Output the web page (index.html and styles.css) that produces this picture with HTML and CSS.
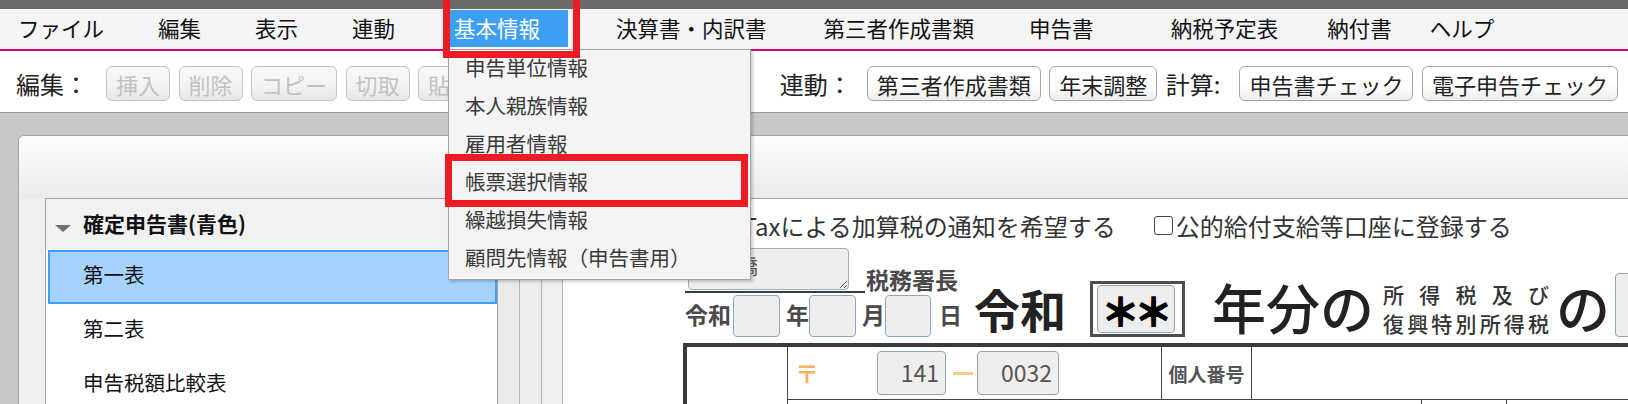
FILE: index.html
```html
<!DOCTYPE html>
<html lang="ja">
<head>
<meta charset="utf-8">
<title>確定申告書</title>
<link rel="stylesheet" href="styles.css">
</head>
<body>
<div class="app">
  <div class="titlestrip"></div>
  <nav class="menubar">
    <span class="menu-item">ファイル</span>
    <span class="menu-item">編集</span>
    <span class="menu-item">表示</span>
    <span class="menu-item">連動</span>
    <span class="menu-item active">基本情報</span>
    <span class="menu-item">決算書・内訳書</span>
    <span class="menu-item">第三者作成書類</span>
    <span class="menu-item">申告書</span>
    <span class="menu-item">納税予定表</span>
    <span class="menu-item">納付書</span>
    <span class="menu-item">ヘルプ</span>
  </nav>
  <div class="toolbar">
    <div class="tool-group">
      <span class="tool-label">編集：</span>
      <button class="btn" disabled>挿入</button>
      <button class="btn" disabled>削除</button>
      <button class="btn" disabled>コピー</button>
      <button class="btn" disabled>切取</button>
      <button class="btn" disabled>貼付</button>
    </div>
    <div class="tool-group right">
      <span class="tool-label link">連動：</span>
      <button class="btn">第三者作成書類</button>
      <button class="btn">年末調整</button>
      <span class="tool-label calc">計算:</span>
      <button class="btn">申告書チェック</button>
      <button class="btn">電子申告チェック</button>
    </div>
  </div>
  <div class="workspace">
    <div class="panel">
      <div class="panel-head"></div>
      <div class="panel-body">
        <aside class="sidebar">
          <div class="side-head"><span class="tri"></span>確定申告書(青色)</div>
          <ul class="side-list">
            <li class="side-item selected">第一表</li>
            <li class="side-item">第二表</li>
            <li class="side-item">申告税額比較表</li>
          </ul>
        </aside>
        <div class="splitter"><span></span><span></span><span></span></div>
        <main class="form">
          <div class="checks">
            <label class="check"><span class="check-box"></span>e-Taxによる加算税の通知を希望する</label>
            <label class="check"><span class="check-box"></span>公的給付支給等口座に登録する</label>
          </div>
          <div class="title-row">
            <div class="office">
              <div class="addr-row">
                <div class="addr-line"><textarea class="office-input" readonly>日本橋</textarea></div>
                <span class="office-title">税務署長</span>
              </div>
              <div class="date-row">
                <span class="date-label first">令和</span>
                <span class="date-box"></span>
                <span class="date-label">年</span>
                <span class="date-box"></span>
                <span class="date-label">月</span>
                <span class="date-box narrow"></span>
                <span class="date-label day">日</span>
              </div>
            </div>
            <div class="title-main">
              <span class="era">令和</span>
              <div class="year-box"><div class="year-field">＊＊</div></div>
              <span class="year-suffix">年分の</span>
              <div class="tax-name"><span>所得税及び</span><span>復興特別所得税</span></div>
              <span class="no">の</span>
              <div class="kind-box"></div>
            </div>
          </div>
          <div class="table">
            <div class="t-first"></div>
            <div class="t-main">
              <div class="t-row1">
                <div class="postal">
                  <span class="postmark">〒</span>
                  <span class="zip">141</span>
                  <span class="zip-dash"></span>
                  <span class="zip long">0032</span>
                </div>
                <div class="mynum-label">個人番号</div>
                <div class="mynum"></div>
              </div>
              <div class="t-row2">
                <div class="c1"></div>
                <div class="c2"></div>
              </div>
            </div>
          </div>
        </main>
      </div>
    </div>
  </div>

  <div class="dropdown">
    <div class="dd-item">申告単位情報</div>
    <div class="dd-item">本人親族情報</div>
    <div class="dd-item">雇用者情報</div>
    <div class="dd-item">帳票選択情報</div>
    <div class="dd-item">繰越損失情報</div>
    <div class="dd-item">顧問先情報（申告書用）</div>
  </div>
  <div class="callout callout-menu"></div>
  <div class="callout callout-item"></div>
</div>
</body>
</html>
```

FILE: styles.css
```css
* { box-sizing: border-box; }
html, body { margin: 0; padding: 0; }
body {
  width: 1628px;
  height: 404px;
  overflow: hidden;
  background: #c8c8c8;
  font-family: "Noto Sans CJK JP", "Noto Sans", sans-serif;
  color: #1a1a1a;
}
.app { position: relative; width: 1628px; height: 404px; overflow: hidden; }

.titlestrip { height: 9px; background: #6b6b6b; }

/* menu bar */
.menubar {
  height: 42px;
  background: #f4f4f4;
  border-bottom: 2px solid #e2007a;
  display: flex;
  padding: 1px 0 0 18px;
}
.menu-item {
  height: 37px;
  line-height: 35px;
  font-size: 21.5px;
  padding-right: 27px;
  margin-right: 27px;
  color: #111;
  white-space: nowrap;
}
.menu-item.active {
  background: #3d9ff4;
  color: #fff;
  padding-left: 5px;
  padding-right: 28px;
  margin-right: 48px;
}
.menu-item:nth-child(6) { margin-right: 30px; }
.menu-item:nth-child(7) { margin-right: 28px; }
.menu-item:nth-child(8) { margin-right: 50px; }
.menu-item:nth-child(9) { margin-right: 22px; }
.menu-item:nth-child(10) { margin-right: 11px; }

/* toolbar */
.toolbar {
  height: 62px;
  background: #fff;
  border-bottom: 1px solid #9b9b9b;
  display: flex;
  align-items: center;
  justify-content: space-between;
  padding: 4px 10px 0 16px;
}
.tool-group { display: flex; align-items: center; }
.tool-label { font-size: 24px; color: #222; margin-right: 18px; line-height: 35px; white-space: nowrap; }
.tool-label.link { margin-right: 15px; }
.tool-label.calc { margin-left: 0; margin-right: 19px; }
.btn {
  appearance: none;
  height: 35px;
  padding: 0 9px;
  margin: 0 8.5px 0 0;
  font-family: "Noto Sans CJK JP", sans-serif;
  font-size: 22px;
  line-height: 32px;
  border: 1px solid #a7a7a7;
  border-radius: 6px;
  background: linear-gradient(#ffffff 0%, #ffffff 55%, #ebebeb 100%);
  color: #222;
  white-space: nowrap;
}
.btn:disabled {
  color: #c2c2c2;
  border-color: #c4c4c4;
  background: linear-gradient(#f8f8f8 0%, #f3f3f3 55%, #e6e6e6 100%);
}
.tool-group.right .btn:last-child { margin-right: 0; }

/* workspace + panel */
.workspace { padding: 22px 0 0 18px; height: 291px; }
.panel {
  height: 100%;
  border-top: 1px solid #a3a3a3;
  border-left: 1px solid #a3a3a3;
  border-top-left-radius: 6px;
  background: #efefef;
  display: flex;
  flex-direction: column;
}
.panel-head {
  height: 62px;
  flex-shrink: 0;
  background: linear-gradient(#fdfdfd, #ebebeb);
  border-top-left-radius: 5px;
}
.panel-body { flex: 1; display: flex; padding-left: 26px; min-height: 0; }

/* sidebar */
.sidebar {
  width: 453px;
  flex-shrink: 0;
  border: 1px solid #a5a5a5;
  border-bottom: none;
  background: #fff;
}
.side-head {
  height: 51px;
  background: #f1f1f1;
  display: flex;
  align-items: center;
  padding: 0 0 3px 9px;
  font-size: 21px;
  font-weight: bold;
  color: #111;
}
.tri {
  width: 0;
  height: 0;
  border-left: 8px solid transparent;
  border-right: 8px solid transparent;
  border-top: 7px solid #707070;
  margin: 11px 12px 0 0;
}
.side-list { list-style: none; margin: 0; padding: 0; }
.side-item {
  height: 54px;
  margin-left: 2px;
  border: 2px solid transparent;
  padding: 0 0 7px 33px;
  display: flex;
  align-items: center;
  font-size: 20.5px;
  color: #111;
}
.side-item.selected { background: #a5d3fd; border-color: #3f9ff5; }

/* splitter columns */
.splitter { display: flex; flex-shrink: 0; border-top: 1px solid #a5a5a5; }
.splitter span { width: 22px; border-right: 1px solid #b3b3b3; background: #ebebeb; }
.splitter span:nth-child(2) { background: #ededed; }
.splitter span:last-child { width: 21px; background: #efefef; }

/* form */
.form {
  flex: 1;
  min-width: 0;
  overflow: hidden;
  background: #fff;
  border-top: 1px solid #a5a5a5;
  padding-left: 120px;
  display: flex;
  flex-direction: column;
  color: #333;
}
.checks {
  display: flex;
  align-items: center;
  height: 32px;
  margin-top: 10px;
  padding-left: 17px;
  font-size: 24px;
  white-space: nowrap;
  flex-shrink: 0;
}
.check { display: flex; align-items: center; margin-right: 38px; }
.check-box {
  width: 19px;
  height: 19px;
  border: 1.5px solid #444;
  border-radius: 3px;
  margin-right: 3px;
  background: #fff;
}

.title-row { display: flex; align-items: flex-end; margin-top: 7px; flex-shrink: 0; }
.office { margin-left: 2px; display: flex; flex-direction: column; flex-shrink: 0; }
.addr-row { display: flex; align-items: flex-end; }
.addr-line { padding: 0 16px 1px 3px; border-bottom: 2px solid #3b3b3b; }
.office-input {
  display: block;
  width: 161px;
  height: 42px;
  margin: 0;
  border: 1px solid #97acc7;
  border-radius: 4px;
  background: #efeeec;
  font-family: "Noto Sans CJK JP", sans-serif;
  font-size: 21px;
  line-height: 26px;
  color: #555;
  padding: 3px 6px;
  resize: both;
  overflow: hidden;
}
.office-title {
  font-size: 23px;
  font-weight: bold;
  color: #4a4a4a;
  line-height: 30px;
  margin: 0 0 -1px 1px;
  white-space: nowrap;
}
.date-row {
  display: flex;
  align-items: center;
  margin-top: 2px;
  font-size: 23px;
  font-weight: bold;
  color: #4a4a4a;
}
.date-label { margin-left: 6px; line-height: 1; padding-bottom: 3px; }
.date-label.first { margin-left: 0; margin-right: 2px; }
.date-label.day { margin-left: 8px; }
.date-box {
  width: 47px;
  height: 42px;
  border: 1px solid #8ea6c3;
  border-radius: 4px;
  background: #efeeec;
}
.date-box.narrow { width: 46px; }

.title-main {
  display: flex;
  align-items: center;
  height: 56px;
  margin-left: 12px;
  color: #222;
  flex-shrink: 0;
  white-space: nowrap;
}
.era { font-size: 46px; font-weight: bold; line-height: 1; margin-right: 24px; padding-bottom: 3px; }
.year-box {
  width: 95px;
  height: 56px;
  flex-shrink: 0;
  border: 3px solid #4d4d4d;
  padding: 0 7px 0 4px;
  display: flex;
  align-items: center;
}
.year-field {
  width: 100%;
  height: 48px;
  border: 1px solid #8ea6c3;
  border-radius: 4px;
  background: #efeeec;
  font-size: 38px;
  font-weight: bold;
  letter-spacing: -5px;
  padding-right: 3px;
  color: #000;
  -webkit-text-stroke: 1.5px #000;
  display: flex;
  align-items: center;
  justify-content: center;
}
.year-suffix { font-size: 54px; font-weight: 500; line-height: 1; margin-left: 27px; padding-bottom: 5px; }
.tax-name {
  width: 166px;
  flex-shrink: 0;
  margin-left: 9px;
  font-size: 21px;
  line-height: 29px;
  font-weight: 500;
  color: #333;
}
.tax-name span { display: block; text-align: justify; text-align-last: justify; }
.no { font-size: 54px; font-weight: 500; line-height: 1; margin-left: 7px; padding-bottom: 5px; }
.kind-box {
  align-self: flex-end;
  width: 60px;
  height: 64px;
  flex-shrink: 0;
  margin-left: 5px;
  border: 1px solid #8ea6c3;
  border-radius: 4px;
  background: #efeeec;
}

/* table */
.table {
  display: flex;
  flex: 1;
  margin-top: 6px;
  border-top: 4px solid #3a3a3a;
  border-left: 4px solid #3a3a3a;
}
.t-first { width: 101px; flex-shrink: 0; border-right: 1px solid #444; }
.t-main { flex: 1; display: flex; flex-direction: column; }
.t-row1 { height: 53px; flex-shrink: 0; border-bottom: 1px solid #444; display: flex; }
.postal {
  width: 374px;
  flex-shrink: 0;
  border-right: 1px solid #444;
  display: flex;
  align-items: center;
  padding-left: 7px;
}
.postmark { width: 24px; margin-right: 58px; font-size: 24px; font-weight: bold; color: #fbb062; line-height: 1; }
.zip {
  width: 69px;
  height: 44px;
  border: 1px solid #8ea6c3;
  border-radius: 4px;
  background: #efeeec;
  font-size: 23px;
  line-height: 40px;
  color: #555;
  text-align: right;
  padding-right: 6px;
}
.zip.long { width: 82px; }
.zip-dash { width: 20px; height: 3px; background: #fdc98f; margin: 0 4px 0 7px; }
.mynum-label {
  width: 90px;
  flex-shrink: 0;
  border-right: 1px solid #444;
  display: flex;
  align-items: center;
  justify-content: center;
  font-size: 19px;
  font-weight: bold;
  color: #555;
}
.mynum { flex: 1; }
.t-row2 { display: flex; flex: 1; }
.t-row2 .c1 { width: 634px; border-right: 1px solid #444; }
.t-row2 .c2 { width: 85px; border-right: 1px solid #444; }

/* dropdown menu overlay */
.dropdown {
  position: absolute;
  left: 448px;
  top: 49px;
  width: 303px;
  padding-bottom: 1px;
  background: #f4f4f4;
  border: 1px solid #a3a3a3;
  box-shadow: 2px 2px 3px rgba(0, 0, 0, 0.2);
  z-index: 5;
}
.dd-item {
  height: 38px;
  line-height: 34px;
  padding: 0 0 4px 16px;
  font-size: 20.5px;
  color: #3a3a3a;
  white-space: nowrap;
}

/* red annotation boxes */
.callout { position: absolute; border: 7px solid #ed1c24; z-index: 6; }
.callout-menu { left: 443px; top: -10px; width: 137px; height: 68px; }
.callout-item { left: 445px; top: 154px; width: 303px; height: 53px; }
```
